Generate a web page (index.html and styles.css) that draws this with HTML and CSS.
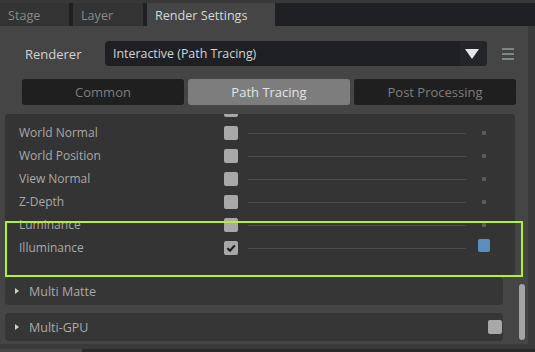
FILE: index.html
```html
<!DOCTYPE html>
<html lang="en">
  <head>
    <meta charset="UTF-8" />
    <title>Render Settings</title>
    <link rel="stylesheet" href="styles.css">
  </head>
  <body>
    <div class="tabbar">
      <div class="tab tab-stage">Stage</div>
      <div class="tab tab-layer">Layer</div>
      <div class="tab tab-render active">Render Settings</div>
    </div>
    <div class="panel">
      <div class="renderer-row">
        <span class="renderer-label">Renderer</span>
        <div class="dropdown">
          <span class="dropdown-text">Interactive (Path Tracing)</span>
          <span class="dropdown-arrow"><span class="tri-down"></span></span>
        </div>
        <div class="menu-icon"><span></span><span></span><span></span></div>
      </div>
      <div class="modes">
        <div class="mode">Common</div>
        <div class="mode selected">Path Tracing</div>
        <div class="mode">Post Processing</div>
      </div>
      <div class="list">
        <div class="list-inner">
          <div class="row"><span class="label"></span><span class="check"></span><span class="track"></span><span class="value"><span class="dot"></span></span></div>
          <div class="row"><span class="label">World Normal</span><span class="check"></span><span class="track"></span><span class="value"><span class="dot"></span></span></div>
          <div class="row"><span class="label">World Position</span><span class="check"></span><span class="track"></span><span class="value"><span class="dot"></span></span></div>
          <div class="row"><span class="label">View Normal</span><span class="check"></span><span class="track"></span><span class="value"><span class="dot"></span></span></div>
          <div class="row"><span class="label">Z-Depth</span><span class="check"></span><span class="track"></span><span class="value"><span class="dot"></span></span></div>
          <div class="row"><span class="label">Luminance</span><span class="check"></span><span class="track"></span><span class="value"><span class="dot"></span></span></div>
          <div class="row"><span class="label">Illuminance</span><span class="check checked"><svg width="14" height="14" viewBox="0 0 14 14"><path d="M3.4 7.2 L6 9.8 L10.8 4.4" fill="none" stroke="#1a1a1a" stroke-width="2.1"/></svg></span><span class="track"></span><span class="value"><span class="swatch"></span></span></div>
        </div>
      </div>
      <div class="lower">
        <div class="sections">
          <div class="section"><span class="tri-right"></span><span class="section-title">Multi Matte</span></div>
          <div class="section"><span class="tri-right"></span><span class="section-title">Multi-GPU</span><span class="check section-check"></span></div>
        </div>
        <div class="scrollbar"></div>
      </div>
    </div>
    <div class="footer"><span class="footer-tab"></span></div>
    <div class="highlight"></div>
  </body>
</html>
```

FILE: styles.css
```css
* {
  margin: 0;
  padding: 0;
  box-sizing: border-box;
}
body {
  width: 535px;
  height: 352px;
  overflow: hidden;
  background-color: #3a3a3a;
  font-family: "Open Sans", sans-serif;
  font-size: 12px;
  position: relative;
}
.tabbar {
  display: flex;
  gap: 4px;
  height: 26px;
  background-color: #1f2023;
  border-top: 3px solid #383838;
}
.tab {
  height: 23px;
  line-height: 25px;
  padding-left: 8px;
  background-color: #333333;
  color: #8a8a8a;
  font-size: 12.6px;
}
.tab-stage {
  width: 69px;
}
.tab-layer {
  width: 70px;
}
.tab-render {
  width: 128px;
}
.tab.active {
  background-color: #454545;
  color: #d6d6d6;
}
.panel {
  width: 528px;
  height: 318px;
  background-color: #454545;
  padding-top: 15px;
}
.renderer-row {
  display: flex;
  align-items: center;
  height: 25px;
  margin-left: 25px;
}
.renderer-label {
  width: 80px;
  color: #d2d2d2;
  font-size: 13px;
}
.dropdown {
  width: 382px;
  height: 25px;
  background-color: #1f2023;
  border-radius: 4px;
  display: flex;
  align-items: center;
  overflow: hidden;
}
.dropdown-text {
  flex: 1;
  padding-left: 8px;
  color: #d4d4d4;
  font-size: 12.4px;
}
.dropdown-arrow {
  width: 27px;
  height: 25px;
  background-color: #242528;
  display: flex;
  justify-content: center;
  align-items: center;
}
.tri-down {
  width: 0;
  height: 0;
  border-left: 7px solid transparent;
  border-right: 7px solid transparent;
  border-top: 10px solid #e6e6e6;
  margin-right: 4px;
}
.menu-icon {
  margin-left: 15px;
  width: 12px;
  display: flex;
  flex-direction: column;
  gap: 3px;
}
.menu-icon span {
  height: 2px;
  background-color: #7c8787;
}
.modes {
  display: grid;
  grid-template-columns: 162px 162px 162px;
  gap: 4px;
  margin: 13px 0 0 22px;
  height: 26px;
}
.mode {
  background-color: #1f1f1f;
  color: #7e7e7e;
  border-radius: 3px;
  font-size: 13px;
  display: flex;
  justify-content: center;
  align-items: center;
}
.mode.selected {
  background-color: #7d7d7d;
  color: #e4e4e4;
}
.list {
  margin: 9px 0 0 5px;
  width: 510px;
  height: 161px;
  background-color: #343434;
  border-radius: 3px;
  overflow: hidden;
}
.list-inner {
  margin-top: -16px;
}
.row {
  display: flex;
  align-items: center;
  height: 23px;
  padding-left: 14px;
}
.label {
  width: 205px;
  color: #a9a9a9;
}
.check {
  width: 14px;
  height: 14px;
  background-color: #a8a8a8;
  border-radius: 2px;
}
.check svg {
  display: block;
}
.track {
  margin: 2px 0 0 10px;
  width: 218px;
  height: 1px;
  background-color: #4b4b4b;
}
.value {
  width: 14px;
  margin-left: 11px;
  display: flex;
  justify-content: center;
}
.dot {
  width: 4px;
  height: 4px;
  border-radius: 1px;
  background-color: #5c5c5c;
}
.swatch {
  width: 12px;
  height: 13px;
  margin-top: -5px;
  border-radius: 2px;
  background-color: #5b8dbd;
}
.lower {
  display: flex;
  margin: 2px 0 0 5px;
}
.sections {
  width: 498px;
  display: flex;
  flex-direction: column;
  gap: 8px;
}
.section {
  height: 28px;
  background-color: #363636;
  border-radius: 4px;
  display: flex;
  align-items: center;
  padding-left: 10px;
}
.tri-right {
  width: 0;
  height: 0;
  border-top: 3px solid transparent;
  border-bottom: 3px solid transparent;
  border-left: 4px solid #cfcfcf;
}
.section-title {
  margin-left: 10px;
  color: #a9a9a9;
  font-size: 12.5px;
}
.section-check {
  margin-left: auto;
  margin-right: 1px;
}
.scrollbar {
  margin: 7px 0 0 16px;
  width: 6px;
  height: 56px;
  border-radius: 3px;
  background-color: #a3a3a3;
}
.footer {
  height: 8px;
  background-color: #2a2a2a;
}
.footer-tab {
  display: block;
  width: 82px;
  height: 3px;
  margin-top: 5px;
  background-color: #474747;
}
.highlight {
  position: absolute;
  left: 5px;
  top: 221px;
  width: 518px;
  height: 56px;
  border: 2px solid #b1f12e;
}
```
